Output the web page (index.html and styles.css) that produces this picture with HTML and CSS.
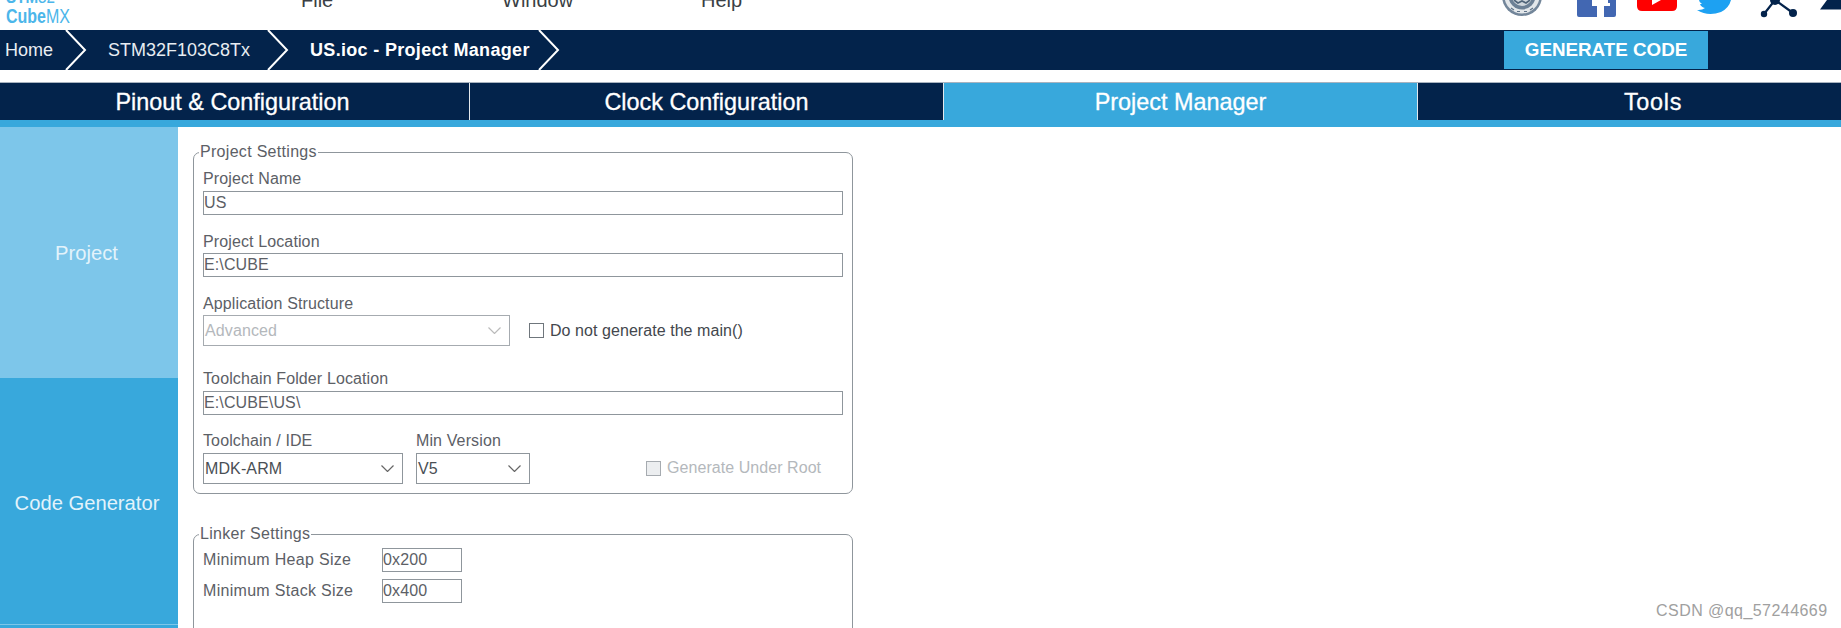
FILE: index.html
```html
<!DOCTYPE html>
<html lang="en">
<head>
<meta charset="utf-8">
<title>STM32CubeMX</title>
<link rel="stylesheet" href="styles.css">
</head>
<body>
<header class="topbar">
  <div class="logo">
    <div class="logo-stm"><b>STM</b>32<svg class="logo-mark" viewBox="0 0 10 6"><path d="M0 0h10L6 6H2z"/></svg></div>
    <div class="logo-cube"><b>Cube</b>MX</div>
  </div>
  <nav class="menu">
    <span>File</span>
    <span>Window</span>
    <span>Help</span>
  </nav>
  <div class="social">
    <svg class="ic-seal" viewBox="0 0 40 30"><circle cx="20" cy="-4" r="20" fill="#73869a"/><circle cx="20" cy="-4" r="17.5" fill="#e3e7ea"/><circle cx="20" cy="-4" r="13.5" fill="#6c8095"/><circle cx="20" cy="-4" r="10" fill="#cfd6dc"/><path d="M12 0l4 3 4-2 4 2 4-3" fill="none" stroke="#4f6479" stroke-width="1.6"/><path d="M9 8l3 2M15 11.500h3M22 11.500h3M28 10l3-2" stroke="#5f7388" stroke-width="1.2"/></svg>
    <svg class="ic-fb" viewBox="0 0 40 30"><path d="M0 0h15v6h5v11H2a2 2 0 0 1-2-2zM27 6h6V0h6v15a2 2 0 0 1-2 2H27z" fill="#4267b2"/><path d="M31 0h8v3h-8z" fill="#4267b2"/></svg>
    <svg class="ic-yt" viewBox="0 0 40 30"><path d="M0 0h40v6q0 5-5 5H5q-5 0-5-5z" fill="#f00"/><path d="M15 0h9l-9 5z" fill="#fff"/></svg>
    <svg class="ic-tw" viewBox="0 0 36 30"><path d="M0 10Q5 10.500 8 8 4 7 3 4H5Q2 2 2 0H34Q32 8 24 12 11 17 0 10z" fill="#1da1f2"/></svg>
    <svg class="ic-net" viewBox="0 0 42 30"><path d="M20 0L9 14M20 0L38 13" fill="none" stroke="#03234b" stroke-width="2.2"/><path d="M20 0L14-3" stroke="#03234b" stroke-width="2"/><circle cx="20" cy="0" r="5" fill="#03234b"/><circle cx="9" cy="14" r="3.200" fill="#03234b"/><circle cx="38" cy="13" r="4" fill="#03234b"/></svg>
    <svg class="ic-tri" viewBox="0 0 21 30"><path d="M0 9.500L7 0h14v9.500z" fill="#03234b"/></svg>
  </div>
</header>

<div class="crumbs">
  <div class="crumb crumb-home">Home</div>
  <svg class="chev" viewBox="0 0 22 40"><path d="M1 0l19 20L1 40" /></svg>
  <div class="crumb crumb-chip">STM32F103C8Tx</div>
  <svg class="chev" viewBox="0 0 22 40"><path d="M1 0l19 20L1 40" /></svg>
  <div class="crumb crumb-now">US.ioc - Project Manager</div>
  <svg class="chev" viewBox="0 0 22 40"><path d="M1 0l19 20L1 40" /></svg>
  <div class="generate">GENERATE CODE</div>
</div>

<div class="tabs">
  <div class="tab tab-pinout">Pinout &amp; Configuration</div>
  <div class="tab">Clock Configuration</div>
  <div class="tab tab-active">Project Manager</div>
  <div class="tab tab-tools">Tools</div>
</div>
<div class="strip"></div>

<main class="main">
  <aside class="side">
    <div class="side-item side-project">Project</div>
    <div class="side-item side-code">Code Generator</div>
    <div class="side-rest"></div>
  </aside>
  <section class="content">
    <fieldset class="group group-project">
      <legend>Project Settings</legend>
      <div class="label first">Project Name</div>
      <div class="field">US</div>
      <div class="label">Project Location</div>
      <div class="field">E:\CUBE</div>
      <div class="label">Application Structure</div>
      <div class="row row-app">
        <div class="select select-app disabled">Advanced<svg class="arrow" viewBox="0 0 13 7"><path d="M.5.5l6 6 6-6"/></svg></div>
        <div class="check"><span class="box"></span>Do not generate the main()</div>
      </div>
      <div class="label label-tool">Toolchain Folder Location</div>
      <div class="field">E:\CUBE\US\</div>
      <div class="pair">
        <div class="pair-col col-ide">
          <div class="label label-pair">Toolchain / IDE</div>
          <div class="select">MDK-ARM<svg class="arrow" viewBox="0 0 13 7"><path d="M.5.5l6 6 6-6"/></svg></div>
        </div>
        <div class="pair-col col-ver">
          <div class="label label-pair">Min Version</div>
          <div class="select">V5<svg class="arrow" viewBox="0 0 13 7"><path d="M.5.5l6 6 6-6"/></svg></div>
        </div>
        <div class="check check-root"><span class="box box-off"></span>Generate Under Root</div>
      </div>
    </fieldset>
    <fieldset class="group group-linker">
      <legend>Linker Settings</legend>
      <div class="size-row size-heap"><div class="size-label">Minimum Heap Size</div><div class="field field-small">0x200</div></div>
      <div class="size-row"><div class="size-label">Minimum Stack Size</div><div class="field field-small">0x400</div></div>
    </fieldset>
  </section>
</main>
<div class="watermark">CSDN @qq_57244669</div>
</body>
</html>
```
FILE: styles.css
```css
* { box-sizing: border-box; }
html, body { margin: 0; height: 628px; overflow: hidden; background: #fff; }
body { font-family: "Liberation Sans", Arial, sans-serif; color: #5c6066; position: relative; }

.topbar { height: 30px; display: flex; overflow: hidden; }
.logo { width: 301px; flex: none; margin-top: -10px; padding-left: 6px; color: #4cb6ea; }
.logo-stm, .logo-cube { transform: scaleX(.8); transform-origin: left center; white-space: nowrap; }
.logo-stm { font-size: 19px; line-height: 14px; height: 17px; }
.logo-mark { width: 12px; height: 6px; fill: #4cb6ea; margin-left: 22px; vertical-align: 4px; }
.logo-cube { font-size: 20px; line-height: 19px; }
.logo-cube b { font-weight: 700; }
.menu { display: grid; grid-template-columns: 201px 199px 100px; margin-top: -12px; font-size: 20px; line-height: 24px; color: #3a3f45; }
.social { display: flex; position: absolute; left: 1502px; top: 0; height: 30px; }
.social svg { height: 30px; flex: none; display: block; overflow: hidden; }
.ic-seal { width: 40px; margin-right: 35px; }
.ic-fb { width: 40px; margin-right: 20px; }
.ic-yt { width: 40px; margin-right: 20px; }
.ic-tw { width: 36px; margin-right: 22px; }
.ic-net { width: 42px; margin-right: 23px; }
.ic-tri { width: 21px; }

.crumbs { height: 40px; background: #03234b; display: flex; align-items: center; color: #e8edf2; font-size: 18px; }
.crumb { white-space: nowrap; }
.crumb-home { width: 65px; padding-left: 5px; }
.crumb-chip { width: 180px; padding-left: 21px; }
.crumb-now { width: 249px; padding-left: 21px; font-weight: 700; color: #fff; letter-spacing: .32px; }
.chev { width: 22px; height: 40px; flex: none; }
.chev path { fill: none; stroke: #fff; stroke-width: 2; }
.generate { margin-left: 944px; width: 204px; height: 38px; background: #38a8dc; color: #fff; font-weight: 700; font-size: 18.8px; line-height: 38px; text-align: center; }

.tabs { margin-top: 12px; height: 38px; display: grid; grid-template-columns: 470px 474px 474px 423px; background: #03234b; border-top: 1px solid #a8b3bf; }
.tab { color: #fff; font-size: 23.4px; line-height: 38px; height: 37px; text-align: center; border-right: 1px solid #e4e8ec; -webkit-text-stroke: .3px #fff; }
.tab:last-child { border-right: 0; }
.tab-pinout { padding-right: 4px; }
.tab-tools { padding-left: 47px; letter-spacing: .7px; }
.tab-active { background: #38a8dc; }
.strip { height: 7px; background: #38a8dc; }

.main { display: flex; height: 501px; }
.side { width: 178px; flex: none; display: flex; flex-direction: column; background: #38a8dc; color: #e3f3fb; font-size: 20.2px; }
.side-item { display: flex; align-items: center; justify-content: center; }
.side-project { height: 251px; background: #7dc6ea; padding: 2px 5px 0 0; }
.side-code { height: 247px; background: #38a8dc; border-bottom: 1px solid #7dc6ea; padding: 4px 4px 0 0; }
.side-rest { flex: 1; }

.content { padding: 16px 0 0 15px; }
.group { width: 660px; margin: 0; padding: 0 9px 9px; border: 1px solid #8f969c; border-radius: 7px; font-size: 16px; letter-spacing: .12px; }
legend { margin-left: -4px; padding: 0 1px; font-size: 16px; line-height: 18px; letter-spacing: .3px; color: #5c6066; }
.label { line-height: 18px; margin-top: 18px; margin-bottom: 2px; white-space: nowrap; }
.label.first { margin-top: 9px; margin-bottom: 3px; }
.label-tool { margin-top: 24px; margin-bottom: 3px; }
.label-pair { margin-top: 17px; margin-bottom: 3px; }
.field { height: 24px; border: 1px solid #8f969c; line-height: 22px; padding-left: 0; font-size: 16px; color: #5c6066; }
.select { position: relative; height: 31px; border: 1px solid #8f969c; line-height: 29px; padding-left: 1px; font-size: 16px; color: #4a4f55; }
.select.disabled { color: #b4b8bc; border-color: #a6abb0; }
.arrow { position: absolute; top: 11px; right: 8px; width: 13px; height: 7px; fill: none; stroke: #666; stroke-width: 1.2; }
.disabled .arrow { stroke: #bbb; }
.row-app { display: flex; align-items: center; }
.select-app { width: 307px; }
.check { display: flex; align-items: center; margin-left: 19px; white-space: nowrap; color: #43474d; letter-spacing: .06px; }
.box { width: 15px; height: 15px; border: 1px solid #6f767c; margin-right: 6px; flex: none; background: #fff; }
.box-off { border-color: #a6abb0; background: #eceef0; }
.pair { display: flex; }
.col-ide { width: 200px; }
.col-ver { width: 114px; margin-left: 13px; }
.check-root { margin-left: 116px; margin-top: 38px; height: 30px; color: #b4b8bc; align-self: flex-start; }

.group-linker { margin-top: 31px; height: 140px; }
.size-row { display: flex; align-items: center; height: 24px; }
.size-heap { margin: 5px 0 7px; }
.size-label { width: 179px; letter-spacing: .3px; }
.field-small { width: 80px; }

.watermark { position: absolute; left: 1656px; top: 602px; font-size: 16px; line-height: 18px; letter-spacing: .45px; color: #a0a0a0; }
```
